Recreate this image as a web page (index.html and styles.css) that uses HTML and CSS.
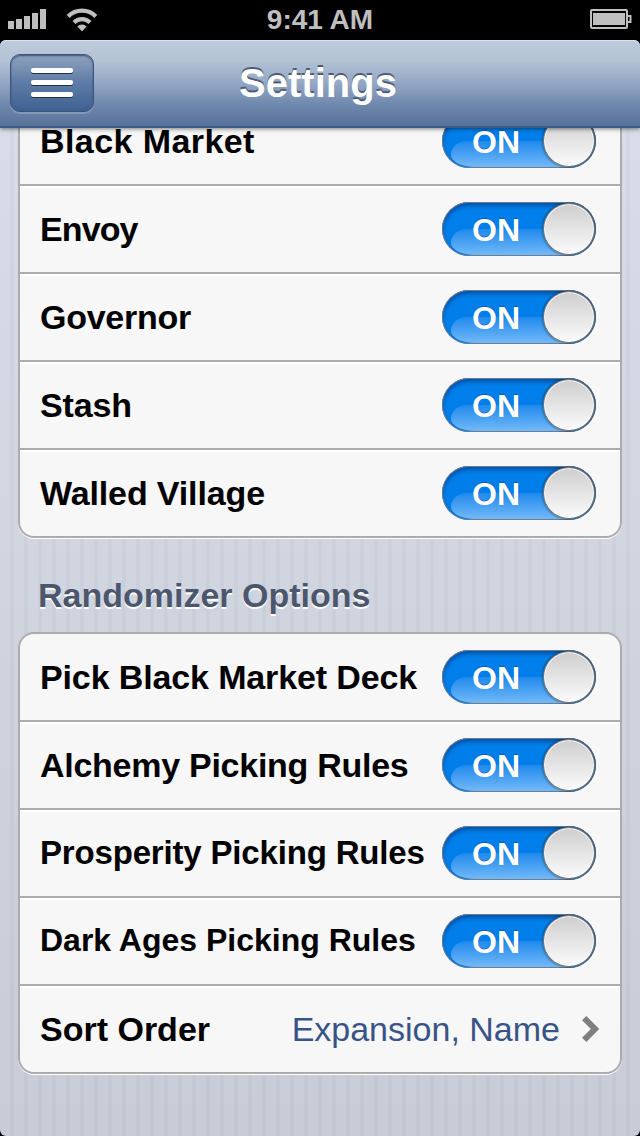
FILE: index.html
```html
<!DOCTYPE html>
<html lang="en">
<head>
    <meta charset="UTF-8">
    <meta name="viewport" content="width=device-width, initial-scale=1.0">
    <title>Settings</title>
    <link rel="stylesheet" href="styles.css">
</head>
<body>
    <div class="screen">
        <div class="statusbar">
            <div class="status-left">
                <svg class="signal" width="38" height="20" viewBox="0 0 38 20" fill="#bfbfbf">
                    <rect x="0" y="12" width="6" height="8"/>
                    <rect x="8" y="10" width="6" height="10"/>
                    <rect x="16" y="7" width="6" height="13"/>
                    <rect x="24" y="4" width="6" height="16"/>
                    <rect x="32" y="0" width="6" height="20"/>
                </svg>
                <svg class="wifi" width="32" height="24" viewBox="0 0 32 24" fill="none" stroke="#bfbfbf" stroke-width="4.2">
                    <path d="M2.2 8.4A19.5 19.5 0 0 1 29.8 8.4"/>
                    <path d="M8 14.4A11.4 11.4 0 0 1 24 14.4"/>
                    <path d="M16 23.4L11.4 18.6A6.2 6.2 0 0 1 20.6 18.6Z" fill="#bfbfbf" stroke="none"/>
                </svg>
            </div>
            <p class="clock">9:41 AM</p>
            <svg class="battery" width="42" height="20" viewBox="0 0 42 20">
                <rect x="1" y="1" width="36" height="18" rx="1" fill="none" stroke="#bfbfbf" stroke-width="2"/>
                <rect x="3" y="4" width="32" height="12" fill="#bfbfbf"/>
                <path d="M37 7H40.5V13H37" fill="none" stroke="#bfbfbf" stroke-width="2"/>
            </svg>
        </div>
        <header class="navbar">
            <div class="menu-btn">
                <span class="line"></span>
                <span class="line"></span>
                <span class="line"></span>
            </div>
            <h1>Settings</h1>
        </header>
        <main class="content">
            <div class="group group-top">
                <div class="row"><p class="label wide">Black Market</p><div class="switch"><span class="on">ON</span><span class="knob"></span></div></div>
                <div class="row"><p class="label narrow">Envoy</p><div class="switch"><span class="on">ON</span><span class="knob"></span></div></div>
                <div class="row"><p class="label snug">Governor</p><div class="switch"><span class="on">ON</span><span class="knob"></span></div></div>
                <div class="row"><p class="label">Stash</p><div class="switch"><span class="on">ON</span><span class="knob"></span></div></div>
                <div class="row"><p class="label">Walled Village</p><div class="switch"><span class="on">ON</span><span class="knob"></span></div></div>
            </div>
            <h2>Randomizer Options</h2>
            <div class="group">
                <div class="row"><p class="label">Pick Black Market Deck</p><div class="switch"><span class="on">ON</span><span class="knob"></span></div></div>
                <div class="row"><p class="label snug">Alchemy Picking Rules</p><div class="switch"><span class="on">ON</span><span class="knob"></span></div></div>
                <div class="row"><p class="label label-medium">Prosperity Picking Rules</p><div class="switch"><span class="on">ON</span><span class="knob"></span></div></div>
                <div class="row"><p class="label label-small">Dark Ages Picking Rules</p><div class="switch"><span class="on">ON</span><span class="knob"></span></div></div>
                <div class="row">
                    <p class="label even">Sort Order</p>
                    <p class="value">Expansion, Name</p>
                    <svg class="arrow" width="18" height="26" viewBox="0 0 18 26" fill="none" stroke="#7f7f7f" stroke-width="6">
                        <path d="M2.2 2.2L13 13L2.2 23.8"/>
                    </svg>
                </div>
            </div>
        </main>
    </div>
</body>
</html>
```
FILE: styles.css
```css
* {
    margin: 0;
    padding: 0;
    box-sizing: border-box;
    font-family: "Liberation Sans", Arial, Helvetica, sans-serif;
}
body {
    background: #000;
}
.screen {
    display: flex;
    flex-direction: column;
    width: 640px;
    height: 1136px;
    overflow: hidden;
    background: #000;
}

/* Status bar */
.statusbar {
    display: grid;
    grid-template-columns: 1fr auto 1fr;
    align-items: center;
    height: 40px;
    padding: 0 8px;
    color: #bfbfbf;
}
.status-left {
    display: flex;
    align-items: center;
    gap: 20px;
}
.signal {
    margin-top: -2px;
}
.wifi {
    margin-top: -1px;
}
.clock {
    font-size: 28px;
    font-weight: bold;
    line-height: 40px;
}
.battery {
    justify-self: end;
    margin-top: -2px;
}

/* Title bar */
.navbar {
    position: relative;
    z-index: 1;
    display: grid;
    grid-template-columns: 84px 1fr 84px;
    align-items: center;
    height: 88px;
    padding: 0 10px;
    border-radius: 6px 6px 0 0;
    border-bottom: 2px solid #3d5a86;
    background: linear-gradient(#becbdb, #b2c1d4 25%, #94a7c5 50%, #7088ae 75%, #577299);
    box-shadow: inset 0 1px 0 #dbe3ec, 0 1px 4px rgba(0, 0, 0, 0.5);
}
.menu-btn {
    display: flex;
    flex-direction: column;
    align-items: center;
    justify-content: center;
    gap: 7px;
    height: 58px;
    padding-bottom: 1px;
    border: 1px solid #3c5276;
    border-radius: 10px;
    background: linear-gradient(#8fa2bd, #5d7ba6 50%, #3f6192);
    box-shadow: inset 0 1px 2px #3c5276, 0 2px 0 rgba(255, 255, 255, 0.2);
}
.line {
    width: 42px;
    height: 5px;
    border-radius: 2px;
    background: #fff;
    box-shadow: 0 1px 0 #22324d;
}
h1 {
    padding-right: 4px;
    font-size: 40px;
    color: #fff;
    text-align: center;
    text-shadow: 0 -2px 0 #4d5c74;
}

/* Settings list */
.content {
    flex: 1;
    padding: 0 18px;
    overflow: hidden;
    border-radius: 0 0 6px 6px;
    background:
        repeating-linear-gradient(to right, transparent 0 10px, rgba(130, 150, 165, 0.08) 10px 14px),
        linear-gradient(#d8dce8, #c7ccd6);
}
.group {
    border: 2px solid #a9abad;
    border-radius: 16px;
    background: #f7f7f7;
    box-shadow: 0 1px 0 #fff;
}
.group-top {
    margin-top: -30px;
    border-top: 0;
    border-radius: 0 0 16px 16px;
}
.row {
    display: flex;
    align-items: center;
    height: 88px;
    padding: 0 24px 0 20px;
    border-bottom: 2px solid #a9abad;
}
.row + .row {
    box-shadow: inset 0 2px 0 #fff;
}
.row:last-child {
    height: 86px;
    border-bottom: 0;
}
.label {
    flex: 1;
    font-size: 34px;
    font-weight: bold;
    letter-spacing: -0.13px;
    white-space: nowrap;
    color: #000;
}
.wide {
    letter-spacing: 0.42px;
}
.narrow {
    letter-spacing: -0.9px;
}
.snug {
    letter-spacing: -0.27px;
}
.even {
    letter-spacing: 0;
}
/* long names shrink to stay clear of the switch */
.label-medium {
    font-size: 33px;
    letter-spacing: -0.17px;
}
.label-small {
    padding-bottom: 2px;
    font-size: 32px;
    letter-spacing: 0;
}
h2 {
    height: 94px;
    padding: 37px 20px 0;
    font-size: 34px;
    line-height: 40px;
    color: #4c566c;
    text-shadow: 0 2px 0 #fff;
}
.value {
    font-size: 34px;
    color: #385487;
}
.arrow {
    margin-left: 22px;
    margin-right: -4px;
}

/* Toggle */
.switch {
    display: flex;
    position: relative;
    align-items: center;
    justify-content: space-between;
    width: 154px;
    height: 54px;
    padding-left: 30px;
    overflow: hidden;
    border-radius: 27px;
    background: #007fea;
    box-shadow: inset 0 0 0 1px #6c7c90, inset 0 3px 5px rgba(0, 30, 90, 0.6);
}
/* gloss over the lower half */
.switch::before {
    content: "";
    position: absolute;
    left: 9px;
    right: 9px;
    top: 27px;
    height: 26px;
    border-radius: 16px 16px 24px 24px / 14px 14px 12px 12px;
    background: linear-gradient(#2089ec, #72b9f8);
}
.on {
    position: relative;
    padding-top: 2px;
    font-size: 32px;
    font-weight: bold;
    color: #fff;
    text-shadow: 0 -1px 1px rgba(0, 60, 140, 0.5);
}
.knob {
    position: relative;
    width: 52px;
    height: 52px;
    margin-right: 1px;
    border-radius: 50%;
    border: 1px solid #747474;
    background: linear-gradient(#cecece, #fbfbfb);
    box-shadow: inset 0 0 0 1px rgba(255, 255, 255, 0.8), 0 0 3px rgba(0, 0, 0, 0.7);
}
```
